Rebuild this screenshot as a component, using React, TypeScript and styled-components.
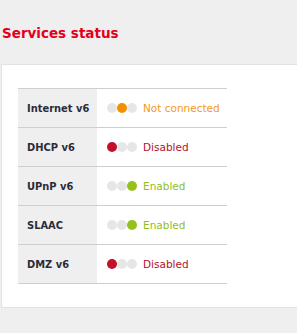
import React from "react";
import styled, { createGlobalStyle } from "styled-components";

const Global = createGlobalStyle`
  html, body { margin: 0; padding: 0; background: #efefef; }
  body { font-family: "DejaVu Sans", Verdana, sans-serif; }
`;

const Page = styled.div`
  padding-top: 23px;
`;

const Title = styled.h2`
  margin: 0 0 0 2px;
  height: 41px;
  line-height: 20px;
  font-size: 13.5px;
  font-weight: bold;
  color: #e2001a;
`;

const Panel = styled.div`
  margin-left: 1px;
  background: #fff;
  border: 1px solid #e2e2e2;
  border-right: none;
  padding: 23px 0 23px 16px;
`;

const Table = styled.div`
  width: 209px;
  border-top: 1px solid #cfcfcf;
`;

const Row = styled.div`
  display: flex;
  height: 38px;
  border-bottom: 1px solid #cfcfcf;
`;

const Label = styled.div`
  width: 79px;
  box-sizing: border-box;
  padding-left: 9px;
  background: #efefef;
  display: flex;
  align-items: center;
  font-family: "DejaVu Sans Condensed", "DejaVu Sans", sans-serif;
  font-size: 11px;
  font-weight: bold;
  color: #2b2b3a;
`;

const Value = styled.div`
  flex: 1;
  display: flex;
  align-items: center;
  padding-left: 10px;
`;

const Dots = styled.div`
  display: flex;
  margin-right: 6px;
`;

const Dot = styled.span<{ $c: string }>`
  width: 10px;
  height: 10px;
  border-radius: 50%;
  background: ${(p) => p.$c};
`;

const Status = styled.span<{ $c: string }>`
  font-size: 10.5px;
  color: ${(p) => p.$c};
`;

type Kind = "off" | "pending" | "on";

const palette: Record<Kind, { dot: string; text: string; idx: number; label: string }> = {
  off: { dot: "#c4112a", text: "#b3122c", idx: 0, label: "Disabled" },
  pending: { dot: "#f29100", text: "#f39a1a", idx: 1, label: "Not connected" },
  on: { dot: "#95c11f", text: "#8fbf24", idx: 2, label: "Enabled" },
};

const rows: { name: string; kind: Kind }[] = [
  { name: "Internet v6", kind: "pending" },
  { name: "DHCP v6", kind: "off" },
  { name: "UPnP v6", kind: "on" },
  { name: "SLAAC", kind: "on" },
  { name: "DMZ v6", kind: "off" },
];

export default function App() {
  return (
    <Page>
      <Global />
      <Title>Services status</Title>
      <Panel>
        <Table>
          {rows.map((r) => {
            const p = palette[r.kind];
            return (
              <Row key={r.name}>
                <Label>{r.name}</Label>
                <Value>
                  <Dots>
                    {[0, 1, 2].map((i) => (
                      <Dot key={i} $c={i === p.idx ? p.dot : "#e6e6e6"} />
                    ))}
                  </Dots>
                  <Status $c={p.text}>{p.label}</Status>
                </Value>
              </Row>
            );
          })}
        </Table>
      </Panel>
    </Page>
  );
}
